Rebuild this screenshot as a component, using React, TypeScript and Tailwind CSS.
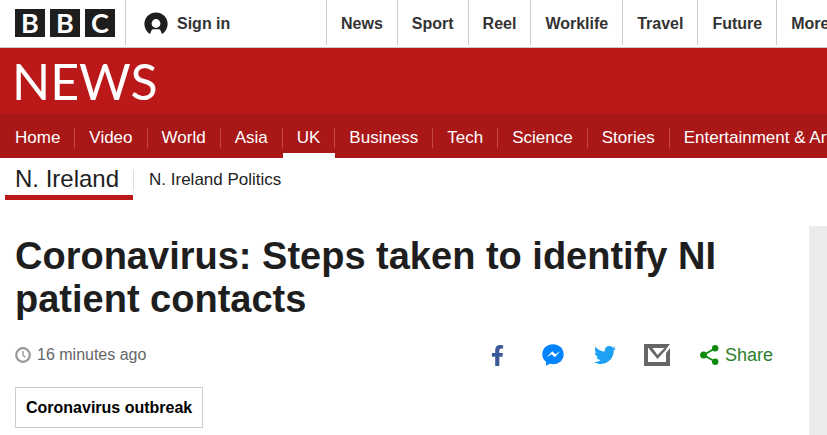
import { FaFacebookF, FaTwitter } from "react-icons/fa";
import clsx from "clsx";

const siteLinks = ["News", "Sport", "Reel", "Worklife", "Travel", "Future", "More"];

const sections = [
  "Home",
  "Video",
  "World",
  "Asia",
  "UK",
  "Business",
  "Tech",
  "Science",
  "Stories",
  "Entertainment & Arts",
];

function AccountIcon() {
  return (
    <svg viewBox="0 0 24 24" className="w-6 h-6" aria-hidden="true">
      <circle cx="12" cy="12" r="11.600" fill="#1e1e1e" />
      <circle cx="12" cy="11.500" r="4.400" fill="#fff" />
      <path d="M8.500 17.200h7c1.200 1.400 1.900 3 2.400 4.800V24H6.100v-2c.5-1.800 1.200-3.400 2.400-4.800z" fill="#fff" />
    </svg>
  );
}

function ClockIcon() {
  return (
    <svg viewBox="0 0 16 16" className="w-4 h-4" fill="none" stroke="#999" aria-hidden="true">
      <circle cx="8" cy="8" r="6.800" strokeWidth="2.200" />
      <path d="M8 4v4.300l2.300 2" strokeWidth="1.400" />
    </svg>
  );
}

function MessengerIcon() {
  return (
    <svg viewBox="0 0 22 22" className="w-[22px] h-[22px]" aria-hidden="true">
      <path
        d="M11 .3C4.900.300.300 4.600.300 10.300c0 3.200 1.400 5.800 3.800 7.600v3.900l3.500-2c1 .3 2.200.5 3.400.5 6.100 0 10.700-4.300 10.700-10S17.100.300 11 .300z"
        fill="#0084ff"
      />
      <path d="M4.600 13.200l5.800-6 2.900 3 5.100-2.900-5.700 5.900-2.900-2.900z" fill="#fff" />
    </svg>
  );
}

function MailIcon() {
  return (
    <svg viewBox="0 0 26 22" className="w-[26px] h-[22px]" aria-hidden="true">
      <path d="M0 0h26v22H0z" fill="#666" />
      <path d="M4 4h18v14H4z" fill="#fff" />
      <path d="M4 3.500h4L13.500 11 21 3.500h3L13.500 15z" fill="#666" />
      <path d="M26 0l-4 5v4l4-5z" fill="#fff" />
    </svg>
  );
}

function ShareIcon() {
  return (
    <svg viewBox="0 0 19 20" className="w-[19px] h-5" aria-hidden="true">
      <path d="M15.200 3.200L3.600 10l11.600 6.800" fill="none" stroke="#0f8a0f" strokeWidth="1.800" />
      <circle cx="15.200" cy="3.200" r="3.200" fill="#0f8a0f" />
      <circle cx="3.600" cy="10" r="3.500" fill="#0f8a0f" />
      <circle cx="15.200" cy="16.800" r="3.200" fill="#0f8a0f" />
    </svg>
  );
}

function TopBar() {
  return (
    <header className="flex h-12 border-b border-[#ccc] text-base font-bold text-[#333]">
      <a
        href="#bbc"
        aria-label="BBC"
        className="flex shrink-0 items-start gap-[5px] pl-[15px] pr-2.5 pt-[9px] mb-0.5 border-r border-[#ccc]"
      >
        {["B", "B", "C"].map((letter, i) => (
          <span
            key={i}
            className="w-[30px] h-7 bg-[#1e1e1e] text-white text-center text-[27px] leading-7 font-bold font-['Lato',sans-serif]"
          >
            {letter}
          </span>
        ))}
      </a>
      <a href="#signin" className="flex shrink-0 items-center gap-[9px] pl-[18px] w-[200px]">
        <AccountIcon />
        Sign in
      </a>
      <nav className="flex grow mb-0.5 overflow-hidden">
        {siteLinks.map((link) => (
          <a key={link} href="#" className="flex items-center border-l border-[#ccc] px-3.5 pt-0.5">
            {link}
          </a>
        ))}
      </nav>
    </header>
  );
}

function SectionNav() {
  return (
    <nav className="flex h-11 overflow-hidden bg-[#a91717] pl-px text-[17px] text-white whitespace-nowrap">
      {sections.map((section) => (
        <a
          key={section}
          href="#"
          className={clsx(
            "flex items-center border-b-[5px] pt-1",
            section === "UK" ? "border-white" : "border-[#a91717]"
          )}
        >
          <span className="flex items-center h-5 mt-1 px-3.5 border-r border-[#c34848]">{section}</span>
        </a>
      ))}
    </nav>
  );
}

export default function App() {
  return (
    <div className="flex flex-col min-h-screen overflow-hidden bg-white font-['Liberation_Sans',Arial,sans-serif]">
      <TopBar />

      <div className="flex items-center h-[66px] px-3 bg-[#bb1919]">
        <a href="#news" className="text-[50px] leading-[66px] text-white font-['Lato',sans-serif]">
          NEWS
        </a>
      </div>
      <SectionNav />

      <nav className="flex items-start pl-[5px] text-[#1e1e1e]">
        <a
          href="#ni"
          className="h-[42px] px-2.5 pr-3.5 text-2xl leading-[42px] border-b-[5px] border-[#bb1919]"
        >
          N. Ireland
        </a>
        <a href="#politics" className="mt-3 pl-[15px] border-l border-[#dcdcdc] text-[17px] leading-5">
          N. Ireland Politics
        </a>
      </nav>

      <div className="flex grow mt-[26px]">
        <main className="grow px-[15px] pt-[9px]">
          <h1 className="text-[38px] leading-[43px] font-bold text-[#1e1e1e]">
            Coronavirus: Steps taken to identify NI patient contacts
          </h1>

          <div className="flex items-center justify-between mt-[22px] pr-[21px]">
            <div className="flex items-center gap-1.5 text-base text-[#666]">
              <ClockIcon />
              <time>16 minutes ago</time>
            </div>
            <div className="flex items-center">
              <a href="#facebook" aria-label="Facebook" className="mr-[34px] text-[#3b5998]">
                <FaFacebookF size={21} />
              </a>
              <a href="#messenger" aria-label="Messenger" className="mr-[30px]">
                <MessengerIcon />
              </a>
              <a href="#twitter" aria-label="Twitter" className="mr-7 text-[#1da1f2]">
                <FaTwitter size={22} />
              </a>
              <a href="#email" aria-label="Email" className="mr-[30px]">
                <MailIcon />
              </a>
              <button type="button" className="flex items-center gap-1.5 text-lg leading-6 text-[#2b7f2b]">
                <ShareIcon />
                Share
              </button>
            </div>
          </div>

          <a
            href="#outbreak"
            className="inline-flex items-center h-[41px] mt-5 px-2.5 border border-[#ccc] text-base font-bold text-black"
          >
            Coronavirus outbreak
          </a>
        </main>
        <aside className="w-[18px] shrink-0 bg-[#ebebeb]" />
      </div>
    </div>
  );
}
